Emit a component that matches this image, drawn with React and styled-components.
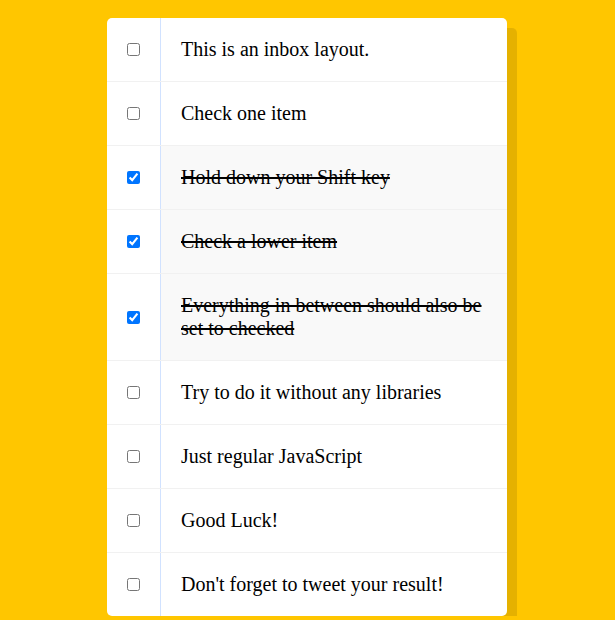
import React, { useState, useRef } from "react";
import styled, { createGlobalStyle } from "styled-components";

const Global = createGlobalStyle`
  html {
    background: #ffc600;
    font-family: "Liberation Sans", sans-serif;
  }
  body {
    margin: 0;
    padding-right: 1px;
  }
`;

const Inbox = styled.div`
  max-width: 400px;
  margin: 18px auto 0;
  background: #ffffff;
  border-radius: 5px;
  box-shadow: 10px 10px 0 rgba(0, 0, 0, 0.1);
`;

const Item = styled.label`
  display: flex;
  align-items: center;
  border-bottom: 1px solid #f1f1f1;
  &:last-child {
    border-bottom: 0;
  }
`;

const Check = styled.input`
  margin: 20px;
  width: 13px;
  height: 13px;
  flex: none;
`;

const Text = styled.p`
  margin: 0;
  padding: 20px;
  flex: 1;
  font-family: "Liberation Serif", "Times New Roman", serif;
  font-size: 20px;
  font-weight: 200;
  line-height: normal;
  color: #000;
  border-left: 1px solid #d1e2ff;
  background: ${(p) => (p.$checked ? "#f9f9f9" : "transparent")};
  text-decoration: ${(p) => (p.$checked ? "line-through" : "none")};
  transition: background 0.2s;
`;

const items = [
  "This is an inbox layout.",
  "Check one item",
  "Hold down your Shift key",
  "Check a lower item",
  "Everything in between should also be set to checked",
  "Try to do it without any libraries",
  "Just regular JavaScript",
  "Good Luck!",
  "Don't forget to tweet your result!",
];

export default function App() {
  const [checked, setChecked] = useState(items.map((_, i) => i >= 2 && i <= 4));
  const last = useRef(null);

  const onClick = (i, e) => {
    const value = !checked[i];
    const next = [...checked];
    if (e.shiftKey && value && last.current !== null) {
      const [a, b] = [Math.min(last.current, i), Math.max(last.current, i)];
      for (let k = a; k <= b; k++) next[k] = true;
    } else {
      next[i] = value;
    }
    last.current = i;
    setChecked(next);
  };

  return (
    <>
      <Global />
      <Inbox>
        {items.map((t, i) => (
          <Item key={i}>
            <Check
              type="checkbox"
              checked={checked[i]}
              onChange={() => {}}
              onClick={(e) => onClick(i, e)}
            />
            <Text $checked={checked[i]}>{t}</Text>
          </Item>
        ))}
      </Inbox>
    </>
  );
}
